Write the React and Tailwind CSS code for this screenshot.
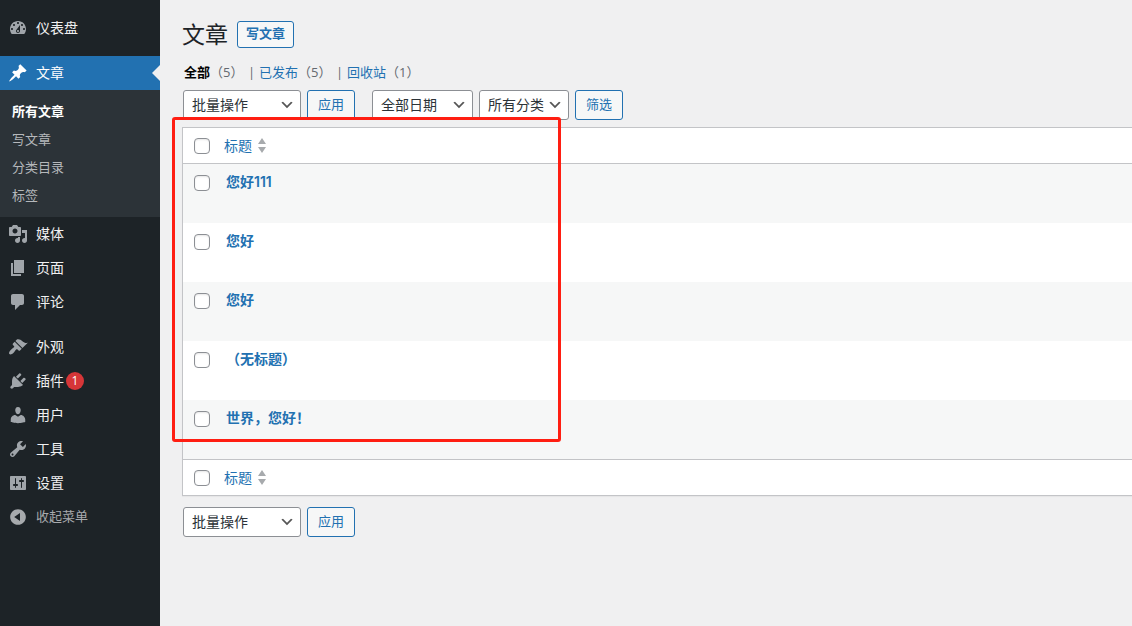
import React from "react";

const ICONS = {
  dashboard:
    "M3.76 16h12.48c1.1-1.37 1.76-3.11 1.76-5 0-4.42-3.58-8-8-8s-8 3.58-8 8c0 1.89.66 3.63 1.76 5zM10 4c.55 0 1 .45 1 1s-.45 1-1 1-1-.45-1-1 .45-1 1-1zM6 6c.55 0 1 .45 1 1s-.45 1-1 1-1-.45-1-1 .45-1 1-1zm8 0c.55 0 1 .45 1 1s-.45 1-1 1-1-.45-1-1 .45-1 1-1zm-5.37 5.55L12 7v6c0 1.1-.9 2-2 2s-2-.9-2-2c0-.57.24-1.08.63-1.45zM4 10c.55 0 1 .45 1 1s-.45 1-1 1-1-.45-1-1 .45-1 1-1zm12 0c.55 0 1 .45 1 1s-.45 1-1 1-1-.45-1-1 .45-1 1-1zm-5 3c0-.55-.45-1-1-1s-1 .45-1 1 .45 1 1 1 1-.45 1-1z",
  post: "M10.44 3.02l1.82-1.82 6.36 6.35-1.83 1.82c-1.05-.68-2.48-.57-3.41.36l-.75.75c-.92.93-1.04 2.35-.35 3.41l-1.83 1.82-2.41-2.41-2.8 2.79c-.42.42-3.38 2.71-3.8 2.29s1.86-3.39 2.28-3.81l2.79-2.79L4.1 9.36l1.83-1.82c1.05.69 2.48.57 3.4-.36l.75-.75c.93-.92 1.05-2.35.36-3.41z",
  media:
    "M13 11V4c0-.55-.45-1-1-1h-1.67L9 1H5L3.67 3H2c-.55 0-1 .45-1 1v7c0 .55.45 1 1 1h10c.55 0 1-.45 1-1zM7 4.5c1.38 0 2.5 1.12 2.5 2.5S8.38 9.5 7 9.5 4.5 8.38 4.5 7 5.62 4.5 7 4.5zM14 6h5v10.5c0 1.38-1.12 2.5-2.5 2.5S14 17.88 14 16.5s1.12-2.5 2.5-2.5c.17 0 .34.02.5.05V9h-3V6zm-4 8.05V13h2v3.5c0 1.38-1.12 2.5-2.5 2.5S7 17.88 7 16.5 8.12 14 9.5 14c.17 0 .34.02.5.05z",
  page: "M6 15V2h10v13H6zm-1 1h8v2H3V5h2v11z",
  comments:
    "M5 2h9c1.1 0 2 .9 2 2v7c0 1.1-.9 2-2 2h-2l-5 5v-5H5c-1.1 0-2-.9-2-2V4c0-1.1.9-2 2-2z",
  appearance:
    "M14.48 11.06L7.41 3.99l1.5-1.5c.5-.56 2.3-.47 3.51.32 1.21.8 1.43 1.28 2.91 2.1 1.18.64 2.45 1.26 4.45.85zm-.71.71L6.7 4.7 4.93 6.47c-.39.39-.39 1.02 0 1.41l1.06 1.06c.39.39.39 1.03 0 1.42-.6.6-1.43 1.11-2.21 1.69-.35.26-.7.53-1.01.84C1.43 14.23.4 16.08 1.4 17.07c.99 1 2.84-.03 4.18-1.36.31-.31.58-.66.85-1.02.57-.78 1.08-1.61 1.69-2.21.39-.39 1.02-.39 1.41 0l1.06 1.06c.39.39 1.02.39 1.41 0z",
  plugins:
    "M13.11 4.36L9.87 7.6 8 5.73l3.24-3.24c.35-.34 1.05-.2 1.56.32.52.51.66 1.21.31 1.55zm-8 1.77l.91-1.12 9.01 9.01-1.19.84c-.71.71-2.63 1.16-3.82 1.16H6.14L4.9 17.26c-.59.59-1.54.59-2.12 0-.59-.58-.59-1.53 0-2.12l1.24-1.24v-3.88c0-1.13.4-3.19 1.09-3.89zm7.26 3.97l3.24-3.24c.34-.35 1.04-.21 1.55.31.52.51.66 1.21.31 1.55l-3.24 3.25z",
  users:
    "M10 9.25c-2.27 0-2.73-3.44-2.73-3.44C7 4.02 7.82 2 9.97 2c2.16 0 2.98 2.02 2.71 3.81 0 0-.41 3.44-2.68 3.44zm0 2.57L12.72 10c2.39 0 4.52 2.33 4.52 4.53v2.49s-3.65 1.13-7.24 1.13c-3.65 0-7.24-1.13-7.24-1.13v-2.49c0-2.25 1.94-4.48 4.47-4.48z",
  tools:
    "M16.68 9.77c-1.34 1.34-3.3 1.67-4.95.99l-5.41 6.52c-.99.99-2.59.99-3.58 0s-.99-2.59 0-3.57l6.52-5.42c-.68-1.65-.35-3.61.99-4.95 1.28-1.28 3.12-1.62 4.72-1.06l-2.89 2.89 2.82 2.82 2.86-2.87c.53 1.58.18 3.39-1.08 4.65zM3.81 16.21c.4.39 1.04.39 1.43 0 .4-.4.4-1.04 0-1.43-.39-.4-1.03-.4-1.43 0-.39.39-.39 1.03 0 1.43z",
  settings:
    "M18 16V4c0-.55-.45-1-1-1H3c-.55 0-1 .45-1 1v12c0 .55.45 1 1 1h14c.55 0 1-.45 1-1zM8 11h1c.55 0 1 .45 1 1s-.45 1-1 1H8v1.5c0 .28-.22.5-.5.5s-.5-.22-.5-.5V13H6c-.55 0-1-.45-1-1s.45-1 1-1h1V5.5c0-.28.22-.5.5-.5s.5.22.5.5V11zm5-2h-1c-.55 0-1-.45-1-1s.45-1 1-1h1V5.5c0-.28.22-.5.5-.5s.5.22.5.5V7h1c.55 0 1 .45 1 1s-.45 1-1 1h-1v5.5c0 .28-.22.5-.5.5s-.5-.22-.5-.5V9z",
  collapse:
    "M10 2.16c4.33 0 7.84 3.51 7.84 7.84s-3.51 7.84-7.84 7.84S2.16 14.33 2.16 10 5.71 2.16 10 2.16zm2 11.72V6.12L6.18 9.97z",
};

function Icon({ name }) {
  return (
    <svg viewBox="0 0 20 20" className="size-5 shrink-0" fill="currentColor" fillRule="evenodd" aria-hidden="true">
      <path d={ICONS[name]} />
    </svg>
  );
}

function MenuItem({ icon, label, badge }) {
  return (
    <li>
      <a href="#" className="flex h-[34px] items-center gap-2 px-2 text-sm text-[#f0f0f1]">
        <span className="text-[#a0a5aa]">
          <Icon name={icon} />
        </span>
        <span className="flex items-center gap-0.5">
          {label}
          {badge && (
            <span className="flex size-[18px] items-center justify-center rounded-full bg-[#d63638] text-xs text-white">
              {badge}
            </span>
          )}
        </span>
      </a>
    </li>
  );
}

const SUBMENU = ["所有文章", "写文章", "分类目录", "标签"];

function Sidebar() {
  return (
    <nav className="w-40 shrink-0 bg-[#1d2327] pt-[11px]">
      <ul>
        <MenuItem icon="dashboard" label="仪表盘" />
      </ul>
      <ul className="mt-[11px]">
        <li>
          <a href="#" className="relative flex h-[34px] items-center gap-2 bg-[#2271b1] px-2 text-sm text-white">
            <Icon name="post" />
            文章
            <span className="absolute top-1/2 right-0 -translate-y-1/2 border-y-8 border-r-8 border-y-transparent border-r-[#f0f0f1]" />
          </a>
          <ul className="bg-[#2c3338] pt-2 pb-[7px]">
            {SUBMENU.map((label, i) => (
              <li key={label}>
                <a
                  href="#"
                  className={
                    i === 0
                      ? "flex h-7 items-center px-3 text-[13px] font-bold text-white"
                      : "flex h-7 items-center px-3 text-[13px] text-[#b5b8bb]"
                  }
                >
                  {label}
                </a>
              </li>
            ))}
          </ul>
        </li>
        <MenuItem icon="media" label="媒体" />
        <MenuItem icon="page" label="页面" />
        <MenuItem icon="comments" label="评论" />
      </ul>
      <ul className="mt-[11px]">
        <MenuItem icon="appearance" label="外观" />
        <MenuItem icon="plugins" label="插件" badge="1" />
        <MenuItem icon="users" label="用户" />
        <MenuItem icon="tools" label="工具" />
        <MenuItem icon="settings" label="设置" />
        <li>
          <button type="button" className="flex h-[34px] w-full items-center gap-2 px-2 text-[13px] text-[#a7aaad]">
            <Icon name="collapse" />
            收起菜单
          </button>
        </li>
      </ul>
    </nav>
  );
}

function Select({ label, option, width }) {
  return (
    <div className={`grid items-center ${width}`}>
      <select
        aria-label={label}
        className="col-start-1 row-start-1 h-[30px] w-full appearance-none rounded-[3px] border border-[#8c8f94] bg-white pr-6 pl-2 text-sm text-[#2c3338]"
      >
        <option>{option}</option>
      </select>
      <svg
        viewBox="0 0 20 20"
        className="pointer-events-none col-start-1 row-start-1 mr-1.5 size-4 justify-self-end"
        fill="#555"
        aria-hidden="true"
      >
        <path d="M5 6l5 5 5-5 2 1-7 7-7-7 2-1z" />
      </svg>
    </div>
  );
}

function Button({ children }) {
  return (
    <button
      type="button"
      className="h-[30px] rounded-[3px] border border-[#2271b1] bg-[#f6f7f7] px-2.5 text-[13px] text-[#2271b1]"
    >
      {children}
    </button>
  );
}

function Checkbox({ label }) {
  return (
    <input
      type="checkbox"
      aria-label={label}
      className="block size-4 appearance-none rounded-[4px] border border-[#8c8f94] bg-white shadow-[inset_0_1px_2px_rgba(0,0,0,0.1)]"
    />
  );
}

function HeadingRow({ edge }) {
  return (
    <tr>
      <th className={`w-[41px] pt-2.5 pb-2 pl-[11px] align-top font-normal ${edge}`}>
        <Checkbox label="全选" />
      </th>
      <th className={`p-0 text-left align-top font-normal ${edge}`}>
        <a href="#" className="flex h-[35px] w-fit items-center gap-1.5 text-sm text-[#2271b1]">
          标题
          <svg viewBox="0 0 8 15" className="h-[15px] w-2" fill="#a7aaad" aria-hidden="true">
            <path d="M4 0l4 6H0zM4 15l4-6H0z" />
          </svg>
        </a>
      </th>
    </tr>
  );
}

const POSTS = ["您好111", "您好", "您好", "（无标题）", "世界，您好！"];

function PostsTable() {
  return (
    <div className="relative border border-r-0 border-[#c3c4c7] bg-white shadow-[0_1px_1px_rgba(0,0,0,0.04)]">
      <table className="w-full border-separate border-spacing-0">
        <thead>
          <HeadingRow edge="border-b border-[#c3c4c7]" />
        </thead>
        <tbody>
          {POSTS.map((title, i) => (
            <tr key={i} className="h-[59px] odd:bg-[#f6f7f7]">
              <th scope="row" className="pt-[11px] pl-[11px] align-top">
                <Checkbox label={`选择${title}`} />
              </th>
              <td className="px-0.5 pt-2 align-top">
                <a
                  href="#"
                  className="block font-['Inter','Noto_Sans_CJK_SC',sans-serif] text-sm leading-5 font-semibold text-[#2271b1]"
                >
                  {title}
                </a>
              </td>
            </tr>
          ))}
        </tbody>
        <tfoot>
          <HeadingRow edge="border-t border-[#c3c4c7]" />
        </tfoot>
      </table>
      <div className="pointer-events-none absolute -top-[11px] -left-[11px] h-[325px] w-[389px] rounded-[3px] border-3 border-[#ff1e12]" />
    </div>
  );
}

export default function App() {
  return (
    <div className="flex min-h-screen bg-[#f0f0f1] font-['Open_Sans','Noto_Sans_CJK_SC',sans-serif] text-[#3c434a]">
      <Sidebar />
      <main className="min-w-0 flex-1 pt-5 pl-[22px]">
        <header className="flex items-center gap-[9px]">
          <h1 className="text-[23px] leading-7 text-[#1d2327]">文章</h1>
          <a
            href="#"
            className="flex h-[27px] items-center rounded-[3px] border border-[#2271b1] bg-[#f6f7f7] px-2 text-[13px] font-semibold text-[#2271b1]"
          >
            写文章
          </a>
        </header>
        <ul className="mt-[14px] flex pl-0.5 text-[13px] leading-5 text-[#646970]">
          <li className="w-16">
            <a href="#" className="font-bold text-black">全部</a>（5）
          </li>
          <li className="flex w-[88px]">
            <span className="w-[11px]">|</span>
            <span>
              <a href="#" className="text-[#2271b1]">已发布</a>（5）
            </span>
          </li>
          <li className="flex">
            <span className="w-[11px]">|</span>
            <span>
              <a href="#" className="text-[#2271b1]">回收站</a>（1）
            </span>
          </li>
        </ul>
        <div className="mt-2 mb-[7px] flex pl-px">
          <div className="flex gap-1.5">
            <Select label="批量操作" option="批量操作" width="w-[118px]" />
            <Button>应用</Button>
          </div>
          <div className="ml-[17px] flex gap-1.5">
            <Select label="按日期筛选" option="全部日期" width="w-[101px]" />
            <Select label="按分类筛选" option="所有分类" width="w-[90px]" />
            <Button>筛选</Button>
          </div>
        </div>
        <PostsTable />
        <div className="mt-[11px] flex gap-1.5 pl-px">
          <Select label="批量操作" option="批量操作" width="w-[118px]" />
          <Button>应用</Button>
        </div>
      </main>
    </div>
  );
}
